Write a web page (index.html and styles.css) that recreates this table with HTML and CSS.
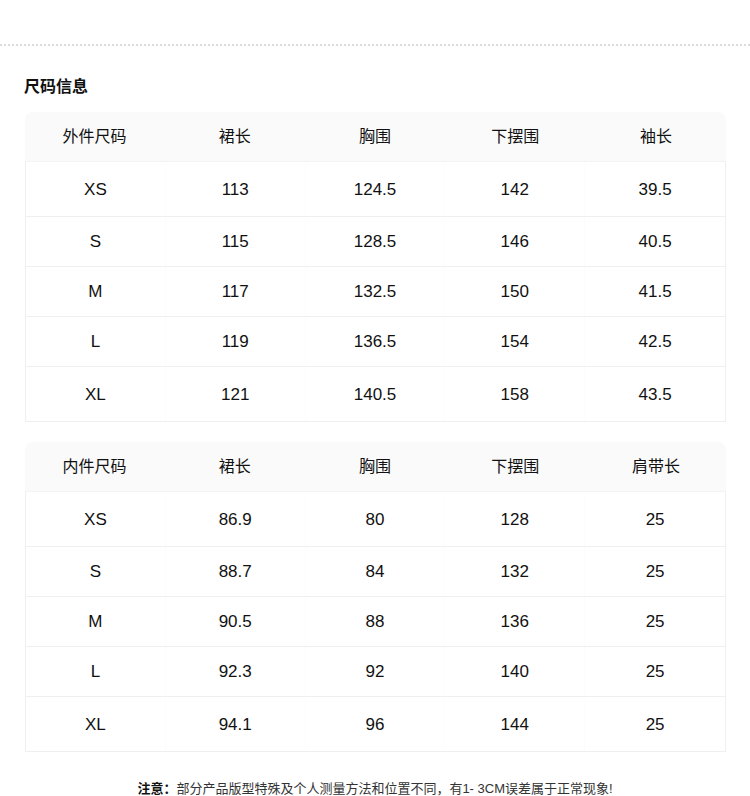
FILE: index.html
```html
<!DOCTYPE html>
<html lang="zh-CN">
<head>
<meta charset="utf-8">
<title>尺码信息</title>
<link rel="stylesheet" href="styles.css">
</head>
<body>
<div class="divider"></div>
<h2 class="title">尺码信息</h2>

<div class="size-table">
  <div class="row head"><div class="cell">外件尺码</div><div class="cell">裙长</div><div class="cell">胸围</div><div class="cell">下摆围</div><div class="cell">袖长</div></div>
  <div class="body">
    <div class="row edge"><div class="cell">XS</div><div class="cell">113</div><div class="cell">124.5</div><div class="cell">142</div><div class="cell">39.5</div></div>
    <div class="row"><div class="cell">S</div><div class="cell">115</div><div class="cell">128.5</div><div class="cell">146</div><div class="cell">40.5</div></div>
    <div class="row"><div class="cell">M</div><div class="cell">117</div><div class="cell">132.5</div><div class="cell">150</div><div class="cell">41.5</div></div>
    <div class="row"><div class="cell">L</div><div class="cell">119</div><div class="cell">136.5</div><div class="cell">154</div><div class="cell">42.5</div></div>
    <div class="row edge last"><div class="cell">XL</div><div class="cell">121</div><div class="cell">140.5</div><div class="cell">158</div><div class="cell">43.5</div></div>
  </div>
</div>

<div class="size-table second">
  <div class="row head"><div class="cell">内件尺码</div><div class="cell">裙长</div><div class="cell">胸围</div><div class="cell">下摆围</div><div class="cell">肩带长</div></div>
  <div class="body">
    <div class="row edge"><div class="cell">XS</div><div class="cell">86.9</div><div class="cell">80</div><div class="cell">128</div><div class="cell">25</div></div>
    <div class="row"><div class="cell">S</div><div class="cell">88.7</div><div class="cell">84</div><div class="cell">132</div><div class="cell">25</div></div>
    <div class="row"><div class="cell">M</div><div class="cell">90.5</div><div class="cell">88</div><div class="cell">136</div><div class="cell">25</div></div>
    <div class="row"><div class="cell">L</div><div class="cell">92.3</div><div class="cell">92</div><div class="cell">140</div><div class="cell">25</div></div>
    <div class="row edge last"><div class="cell">XL</div><div class="cell">94.1</div><div class="cell">96</div><div class="cell">144</div><div class="cell">25</div></div>
  </div>
</div>

<p class="note"><b>注意：</b>部分产品版型特殊及个人测量方法和位置不同，有1- 3CM误差属于正常现象!</p>
</body>
</html>
```
FILE: styles.css
```css
html, body {
  margin: 0;
  padding: 0;
  background: #ffffff;
}
body {
  font-family: "Liberation Sans", "Noto Sans CJK SC", sans-serif;
  color: #111;
  width: 750px;
}
.divider {
  margin-top: 44px;
  border-top: 2px dotted #dcdcdc;
}
.title {
  margin: 29px 0 0 24px;
  font-size: 16px;
  line-height: 24px;
  font-weight: bold;
  color: #111;
}
.size-table {
  margin: 13px 25px 0 25px;
  width: 701px;
}
.size-table.second {
  margin-top: 20px;
}
.row {
  display: grid;
  grid-template-columns: repeat(5, 1fr);
  height: 50px;
  box-sizing: border-box;
  border-bottom: 1px solid #efefef;
}
.row.edge {
  height: 55px;
  padding-top: 2px;
}
.row.last {
  border-bottom: none;
  height: 54px;
  padding-top: 2px;
}
.head {
  background: #fafafa;
  border-radius: 8px 8px 0 0;
  border-bottom: 1px solid #f3f3f3;
}
.body {
  border: 1px solid #efefef;
  border-top: none;
}
.cell {
  display: flex;
  align-items: center;
  justify-content: center;
  font-size: 17px;
  color: #111;
  border-right: 1px solid #fcfcfc;
}
.cell:last-child {
  border-right: none;
}
.head .cell {
  font-size: 16px;
  padding-bottom: 3px;
  border-right-color: #fafafa;
}
.note {
  margin: 27px 0 0 0;
  text-align: center;
  font-size: 13px;
  line-height: 20px;
  color: #333;
}
.note b {
  color: #111;
}
```
